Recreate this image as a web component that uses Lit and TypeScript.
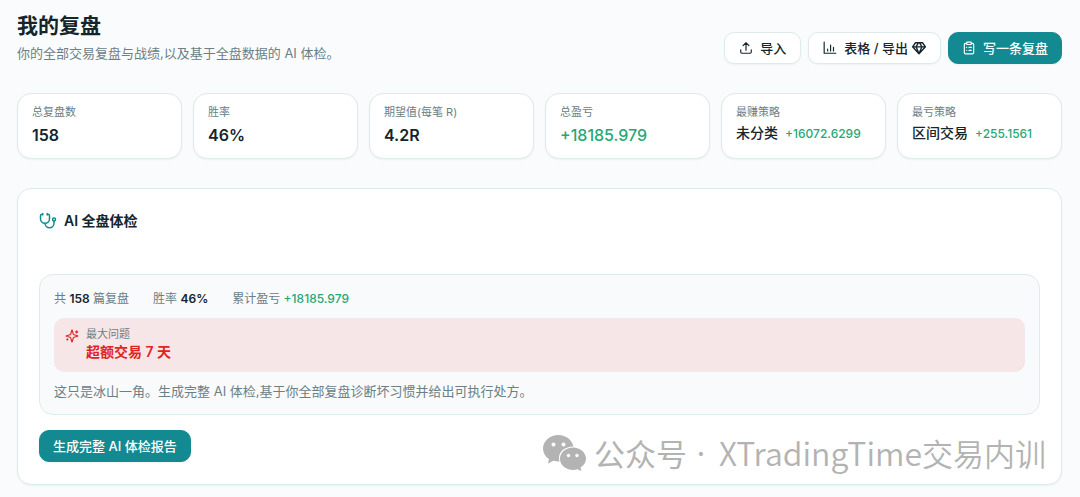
import { LitElement, html, css, svg } from "lit";
import { customElement, property } from "lit/decorators.js";

const icons = {
  upload: svg`<path d="M12 16V3M7 8l5-5 5 5M3 15v4a2 2 0 0 0 2 2h14a2 2 0 0 0 2-2v-4"/>`,
  chart: svg`<path d="M2 2v19h20M8 17v-3M13 17V7M18 17v-6"/>`,
  clipboard: svg`<rect x="8" y="2" width="8" height="4" rx="1"/><path d="M16 4h2a2 2 0 0 1 2 2v14a2 2 0 0 1-2 2H6a2 2 0 0 1-2-2V6a2 2 0 0 1 2-2h2M12 11h4M12 16h4M8 11h.01M8 16h.01"/>`,
  gem: svg`<path stroke-width="2.400" d="M6 3h12l5 7-11 12L1 10ZM11 3 7 10l5 12 5-12-4-7M1 10h22"/>`,
  stethoscope: svg`<path d="M11 2v2M5 2v2M5 3H4a2 2 0 0 0-2 2v4a6 6 0 0 0 12 0V5a2 2 0 0 0-2-2h-1M8 15a6 6 0 0 0 12 0v-3"/><circle cx="20" cy="10" r="2"/>`,
  sparkles: svg`<path d="M9.937 15.500A2 2 0 0 0 8.500 14.063l-6.135-1.582a.5.5 0 0 1 0-.962L8.500 9.936A2 2 0 0 0 9.937 8.500l1.582-6.135a.5.5 0 0 1 .963 0L14.063 8.500A2 2 0 0 0 15.500 9.937l6.135 1.581a.5.5 0 0 1 0 .964L15.500 14.063a2 2 0 0 0-1.437 1.437l-1.582 6.135a.5.5 0 0 1-.963 0zM20 3v4M22 5h-4M4 17v2M5 18H3"/>`,
};

@customElement("ui-icon")
class UiIcon extends LitElement {
  @property() name: keyof typeof icons = "upload";

  static styles = css`
    :host { display: block; flex: none; width: 14px; height: 14px; }
    .icon { display: block; width: 100%; height: 100%; fill: none; stroke: currentColor; stroke-width: 2; stroke-linecap: round; stroke-linejoin: round; }
  `;

  render() {
    return html`<svg class="icon" viewBox="0 0 24 24" aria-hidden="true">${icons[this.name]}</svg>`;
  }
}

interface Stat {
  label: string;
  value: string;
  gain?: boolean;
  delta?: string;
}

const stats: Stat[] = [
  { label: "总复盘数", value: "158" },
  { label: "胜率", value: "46%" },
  { label: "期望值(每笔 R)", value: "4.2R" },
  { label: "总盈亏", value: "+18185.979", gain: true },
  { label: "最赚策略", value: "未分类", delta: "+16072.6299" },
  { label: "最亏策略", value: "区间交易", delta: "+255.1561" },
];

@customElement("app-root")
class AppRoot extends LitElement {
  static styles = css`
    :host {
      display: block;
      box-sizing: border-box;
      min-height: 100vh;
      padding: 12px 18px 12px 17px;
      background: #fafbfd;
      color: #14252b;
      font-family: Inter, "Noto Sans CJK SC", sans-serif;
      font-size: 12px;
      line-height: 18px;
    }
    * { box-sizing: border-box; }
    h1, h2, p, dl, dd { margin: 0; }
    .header { display: flex; justify-content: space-between; align-items: flex-start; gap: 16px; padding-bottom: 29px; }
    .title { font-size: 21px; line-height: 28px; font-weight: 600; }
    .subtitle { margin-top: 3px; font-size: 13px; line-height: 20px; color: #6a8085; }
    .actions { display: flex; gap: 7px; padding-top: 20px; }
    .btn {
      display: inline-flex; align-items: center; justify-content: center; gap: 7px;
      height: 32px; padding: 0 14px; border: 1px solid #deebeb; border-radius: 10px;
      background: #fff; color: #14252b; font: inherit; font-size: 13px; font-weight: 500; white-space: nowrap;
      box-shadow: 0 1px 2px #14252b0d; cursor: pointer;
    }
    .primary { padding: 0 13px; background: #138a91; border-color: #138a91; color: #fff; }
    .with-gem { display: inline-flex; align-items: center; gap: 4px; }
    .stats { display: grid; grid-template-columns: repeat(6, 1fr); gap: 11px; }
    .card { border: 1px solid #deebeb; border-radius: 14px; background: #fff; box-shadow: 0 1px 2px #14252b0d; }
    .stat { min-height: 66px; padding: 10px 14px; }
    .label { font-size: 11px; line-height: 16px; color: #6a8085; }
    .value { margin-top: 3px; font-size: 16px; line-height: 24px; font-weight: 600; white-space: nowrap; }
    .strategy { display: flex; align-items: baseline; gap: 7px; margin-top: 2px; font-size: 14px; line-height: 22px; font-weight: 500; }
    .gain { color: #27a776; font-weight: 500; }
    .delta { font-size: 12px; }
    .page { position: relative; }
    .panel { margin-top: 29px; padding: 21px; padding-bottom: 22px; }
    .panel-title { display: flex; align-items: center; gap: 7px; font-size: 14px; line-height: 22px; font-weight: 600; }
    .teal { width: 18px; height: 18px; color: #138a91; }
    .summary { margin: 42px 0 15px; padding: 15px 14px 14px; border: 1px solid #deebeb; border-radius: 14px; background: #f9fafc; color: #6a8085; }
    .facts { display: flex; flex-wrap: wrap; gap: 24px; }
    .strong { color: #14252b; font-weight: 600; }
    .alert { display: flex; gap: 7px; margin: 10px 0; padding: 8px 11px 10px; border-radius: 10px; background: #f6e6e8; }
    .spark { margin-top: 3px; color: #e02424; }
    .problem { font-size: 14px; line-height: 20px; font-weight: 600; color: #e02424; }
    .note { font-size: 13px; line-height: 18px; }
    .watermark {
      position: absolute; right: 16px; bottom: 9px; display: flex; align-items: center;
      color: #b3b3b3; font: 400 31px/46px "Noto Sans CJK SC", sans-serif; pointer-events: none;
    }
    .dot { width: 6px; height: 6px; margin: 0 15px 0 11px; font-family: "Noto Sans", sans-serif; display: flex; align-items: center; justify-content: center; }
    .thin { font-weight: 350; }
    .latin { font-size: 32px; }
    .wechat { width: 43px; height: 36px; margin-right: 8px; }
  `;

  private renderStat(s: Stat) {
    return html`<div class="card stat">
      <dt class="label">${s.label}</dt>
      ${s.delta
        ? html`<dd class="strategy">${s.value}<span class="gain delta">${s.delta}</span></dd>`
        : html`<dd class="value ${s.gain ? "gain" : ""}">${s.value}</dd>`}
    </div>`;
  }

  render() {
    return html`
      <header class="header">
        <div>
          <h1 class="title">我的复盘</h1>
          <p class="subtitle">你的全部交易复盘与战绩,以及基于全盘数据的 AI 体检。</p>
        </div>
        <div class="actions">
          <button class="btn" type="button"><ui-icon name="upload"></ui-icon>导入</button>
          <button class="btn" type="button"><ui-icon name="chart"></ui-icon><span class="with-gem">表格 / 导出<ui-icon name="gem"></ui-icon></span></button>
          <button class="btn primary" type="button"><ui-icon name="clipboard"></ui-icon>写一条复盘</button>
        </div>
      </header>
      <dl class="stats">${stats.map((s) => this.renderStat(s))}</dl>
      <div class="page">
        <section class="card panel">
          <h2 class="panel-title"><ui-icon class="teal" name="stethoscope"></ui-icon>AI 全盘体检</h2>
          <div class="summary">
            <div class="facts">
              <span>共 <span class="strong">158</span> 篇复盘</span>
              <span>胜率 <span class="strong">46%</span></span>
              <span>累计盈亏 <span class="gain">+18185.979</span></span>
            </div>
            <div class="alert">
              <ui-icon class="spark" name="sparkles"></ui-icon>
              <div>
                <p class="label">最大问题</p>
                <p class="problem">超额交易 7 天</p>
              </div>
            </div>
            <p class="note">这只是冰山一角。生成完整 AI 体检,基于你全部复盘诊断坏习惯并给出可执行处方。</p>
          </div>
          <button class="btn primary" type="button">生成完整 AI 体检报告</button>
        </section>
        <div class="watermark">
          <svg class="wechat" viewBox="0 0 43 36" aria-hidden="true">
            <path fill="#b3b3b3" d="M15.500 0C7 0 0 6 0 13.500c0 4.300 2.300 8 5.900 10.500L5 28.500l5.500-2.700c2 .6 4 .9 6.100.8C14 18 21 11.500 30.500 11.500 29 5 23 0 15.500 0Z"/>
            <path fill="#b3b3b3" d="M30 12.500c-7.200 0-13 5-13 11.300S22.800 35 30 35c1.500 0 3-.2 4.300-.7L38.500 36l-1-3.500c3.300-2 5.500-5.200 5.500-8.700 0-6.300-5.800-11.300-13-11.300Z"/>
            <g fill="#fff"><circle cx="10.500" cy="9.500" r="2"/><circle cx="20.500" cy="9.500" r="2"/><circle cx="25.500" cy="20.500" r="1.700"/><circle cx="34" cy="20.500" r="1.700"/></g>
          </svg><span>公众号</span><span class="dot">·</span><span class="thin"><span class="latin">XTradingTime</span>交易内训</span>
        </div>
      </div>
    `;
  }
}
